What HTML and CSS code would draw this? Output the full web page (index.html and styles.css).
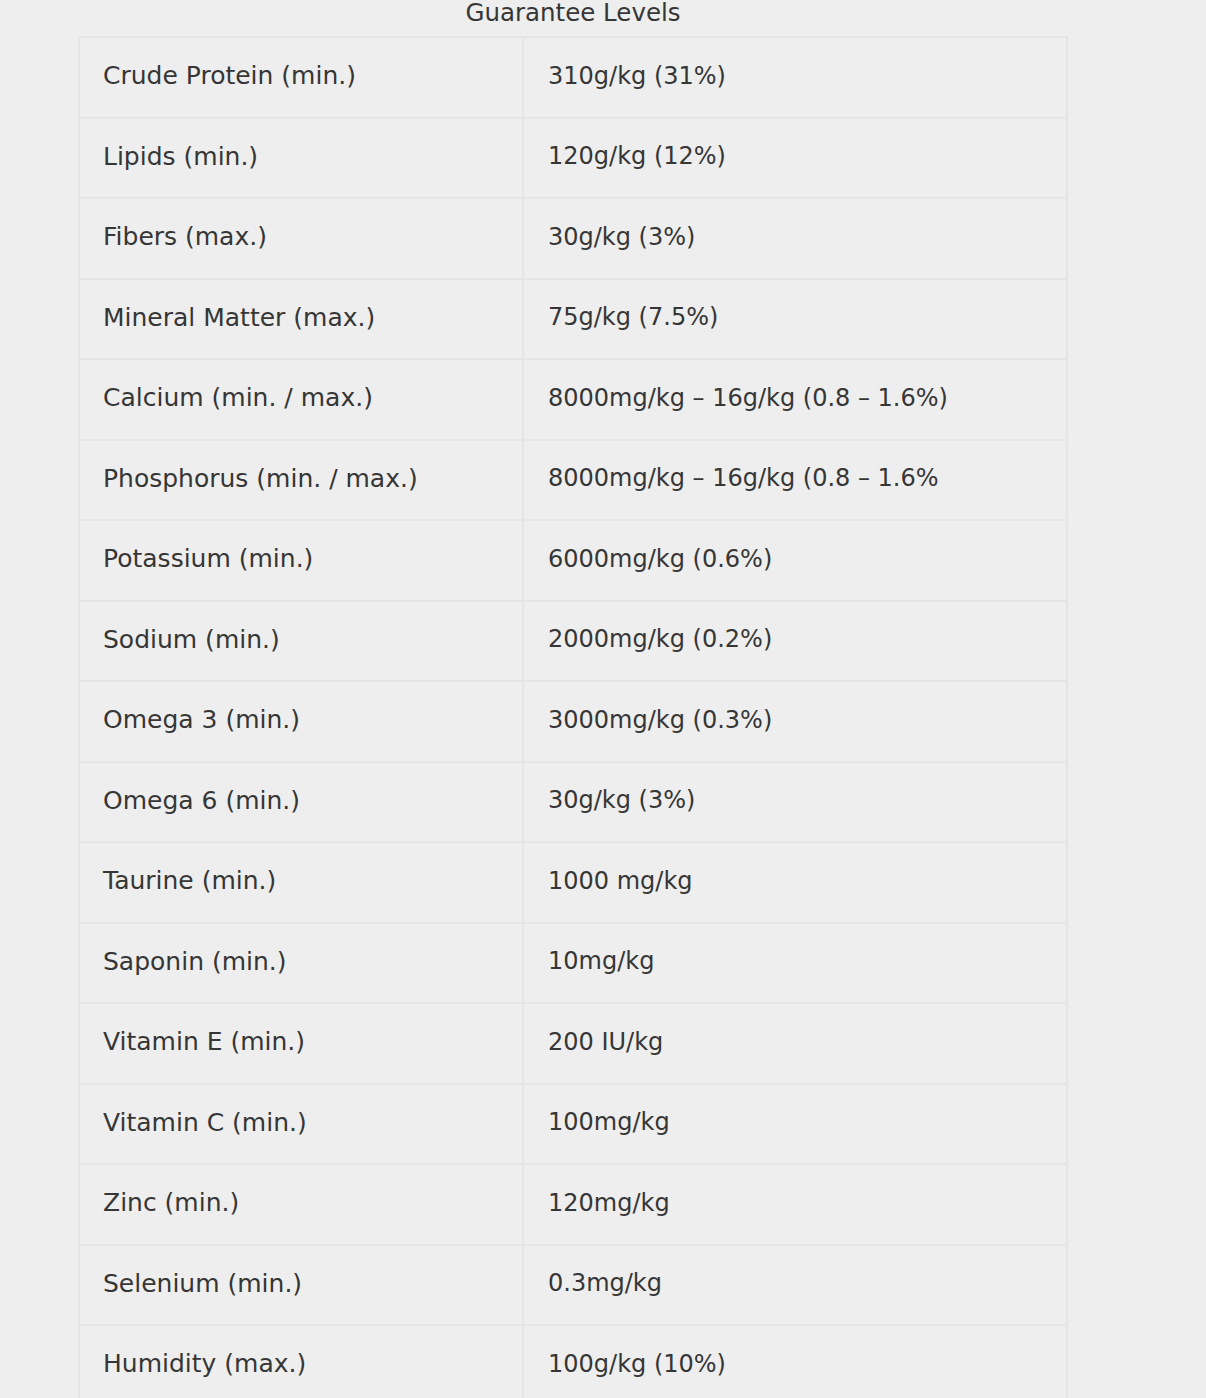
FILE: index.html
```html
<!DOCTYPE html>
<html>
<head>
<meta charset="utf-8">
<link rel="stylesheet" href="styles.css">
</head>
<body>
<div class="wrap">
  <div class="title">Guarantee Levels</div>
  <table class="levels">
    <tr><td>Crude Protein (min.)</td><td>310g/kg (31%)</td></tr>
    <tr><td>Lipids (min.)</td><td>120g/kg (12%)</td></tr>
    <tr><td>Fibers (max.)</td><td>30g/kg (3%)</td></tr>
    <tr><td>Mineral Matter (max.)</td><td>75g/kg (7.5%)</td></tr>
    <tr><td>Calcium (min. / max.)</td><td>8000mg/kg – 16g/kg (0.8 – 1.6%)</td></tr>
    <tr><td>Phosphorus (min. / max.)</td><td>8000mg/kg – 16g/kg (0.8 – 1.6%</td></tr>
    <tr><td>Potassium (min.)</td><td>6000mg/kg (0.6%)</td></tr>
    <tr><td>Sodium (min.)</td><td>2000mg/kg (0.2%)</td></tr>
    <tr><td>Omega 3 (min.)</td><td>3000mg/kg (0.3%)</td></tr>
    <tr><td>Omega 6 (min.)</td><td>30g/kg (3%)</td></tr>
    <tr><td>Taurine (min.)</td><td>1000 mg/kg</td></tr>
    <tr><td>Saponin (min.)</td><td>10mg/kg</td></tr>
    <tr><td>Vitamin E (min.)</td><td>200 IU/kg</td></tr>
    <tr><td>Vitamin C (min.)</td><td>100mg/kg</td></tr>
    <tr><td>Zinc (min.)</td><td>120mg/kg</td></tr>
    <tr><td>Selenium (min.)</td><td>0.3mg/kg</td></tr>
    <tr><td>Humidity (max.)</td><td>100g/kg (10%)</td></tr>
  </table>
</div>
</body>
</html>
```
FILE: styles.css
```css
html, body {
  margin: 0;
  padding: 0;
  background: #eeeeee;
}
body {
  font-family: "DejaVu Sans", "Open Sans", sans-serif;
  color: #363636;
  overflow: hidden;
}
.wrap {
  width: 990px;
  margin-left: 78px;
}
.title {
  text-align: center;
  font-size: 24.5px;
  line-height: 26px;
  height: 36px;
}
.levels {
  width: 990px;
  border-collapse: collapse;
  border: 2px solid #e5e5e5;
}
.levels td {
  height: 80.5px;
  box-sizing: border-box;
  padding: 0 0 3px 24px;
  font-size: 24px;
  border: 2px solid #e5e5e5;
  vertical-align: middle;
}
.levels td:first-child {
  width: 444px;
  padding-left: 23px;
  font-size: 25px;
}
```
